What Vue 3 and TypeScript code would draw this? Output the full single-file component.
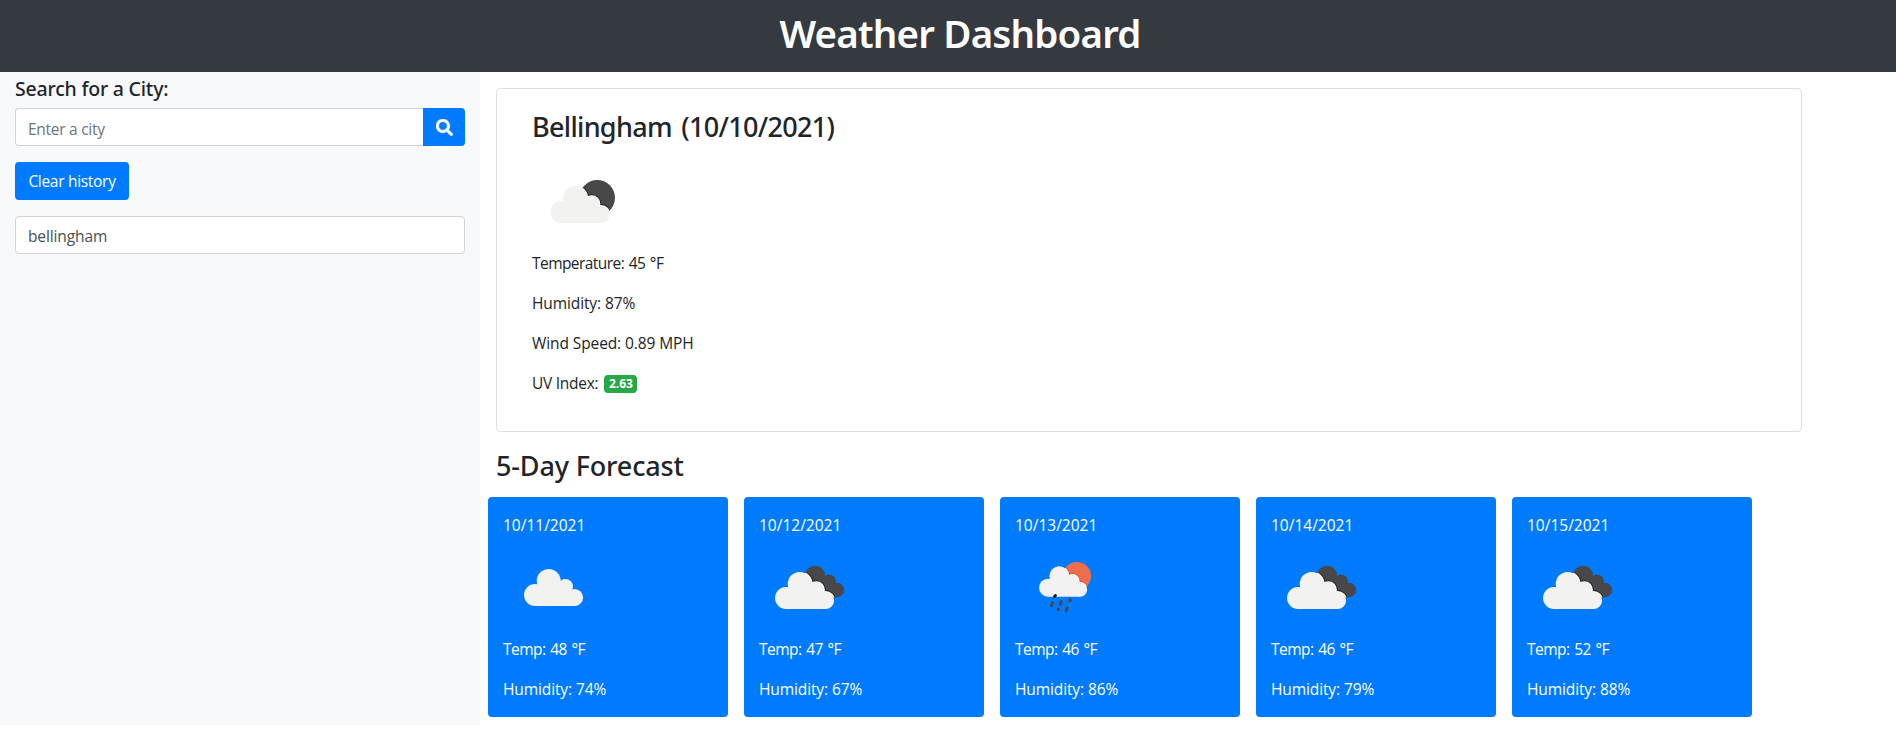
<script setup lang="ts">
import { ref } from 'vue'

interface Day {
  date: string
  icon: 'cloud' | 'broken' | 'rain'
  temp: number
  humidity: number
}

const query = ref('')
const history = ref<string[]>(['bellingham'])

const current = {
  city: 'Bellingham',
  date: '10/10/2021',
  temp: 45,
  humidity: 87,
  wind: 0.89,
  uv: 2.63,
}

const forecast: Day[] = [
  { date: '10/11/2021', icon: 'cloud', temp: 48, humidity: 74 },
  { date: '10/12/2021', icon: 'broken', temp: 47, humidity: 67 },
  { date: '10/13/2021', icon: 'rain', temp: 46, humidity: 86 },
  { date: '10/14/2021', icon: 'broken', temp: 46, humidity: 79 },
  { date: '10/15/2021', icon: 'broken', temp: 52, humidity: 88 },
]

function search() {
  const city = query.value.trim()
  if (city) history.value.unshift(city)
  query.value = ''
}
</script>

<template>
  <!-- Shared shapes for the weather icons -->
  <svg class="defs" width="0" height="0" aria-hidden="true">
    <defs>
      <g id="cloud-shape">
        <circle cx="44.7" cy="44" r="12" />
        <circle cx="31" cy="58" r="11" />
        <circle cx="61.4" cy="49.7" r="7.6" />
        <circle cx="70.5" cy="60.5" r="8.6" />
        <path d="M31 69.1V54L38 46h20l8 8 4.500 4v11.100z" />
      </g>
      <clipPath id="clip-night"><circle cx="65.300" cy="46.700" r="17.700" /></clipPath>
      <clipPath id="clip-sun"><circle cx="61" cy="39" r="14" /></clipPath>
      <clipPath id="clip-dark">
        <circle cx="55" cy="39" r="10.200" />
        <circle cx="69.300" cy="44" r="6.400" />
        <circle cx="76.800" cy="53" r="7.300" />
        <path d="M50 40h20l6 6 1 14.300H60z" />
      </clipPath>
    </defs>
  </svg>

  <header class="header"><h1>Weather Dashboard</h1></header>

  <div class="layout">
    <aside class="sidebar">
      <h5>Search for a City:</h5>
      <form class="search" @submit.prevent="search">
        <input v-model="query" class="control" type="text" placeholder="Enter a city" />
        <button class="btn search-btn" type="submit" aria-label="Search">
          <svg width="17" height="17" viewBox="0 0 512 512" fill="currentColor" stroke="currentColor" stroke-width="14">
            <path d="M505 442.700L405.300 343c-4.500-4.500-10.600-7-17-7H372c27.600-35.300 44-79.700 44-128C416 93.100 322.900 0 208 0S0 93.100 0 208s93.100 208 208 208c48.300 0 92.700-16.400 128-44v16.300c0 6.400 2.500 12.500 7 17l99.700 99.700c9.400 9.400 24.600 9.400 33.900 0l28.300-28.300c9.400-9.400 9.400-24.600.1-34zM208 336c-70.700 0-128-57.200-128-128 0-70.700 57.200-128 128-128 70.700 0 128 57.200 128 128 0 70.700-57.200 128-128 128z" />
          </svg>
        </button>
      </form>
      <button class="btn clear" type="button" @click="history = []">Clear history</button>
      <div v-for="city in history" :key="city" class="control past">{{ city }}</div>
    </aside>

    <main class="main">
      <section class="today">
        <h3 class="city">{{ current.city }} ({{ current.date }})</h3>
        <svg class="icon" viewBox="0 0 100 100">
          <circle cx="65.300" cy="46.700" r="17.700" fill="#48484a" />
          <g clip-path="url(#clip-night)">
            <use href="#cloud-shape" x="-1.500" y="3" fill="#242426" stroke="#242426" stroke-width="3.600" />
            <use href="#cloud-shape" x="-1.500" y="3" fill="#fff" stroke="#fff" stroke-width="1.800" />
          </g>
          <use href="#cloud-shape" x="-1.500" y="3" fill="#f2f2f1" />
        </svg>
        <p class="t-temp">Temperature: {{ current.temp }} °F</p>
        <p class="t-hum">Humidity: {{ current.humidity }}%</p>
        <p class="t-wind">Wind Speed: {{ current.wind }} MPH</p>
        <p class="t-uv"><span>UV Index:</span><span class="badge">{{ current.uv }}</span></p>
      </section>

      <h3 class="forecast-title">5-Day Forecast</h3>
      <div class="forecast">
        <article v-for="day in forecast" :key="day.date" class="day">
          <p class="date">{{ day.date }}</p>
          <svg class="icon" viewBox="0 0 100 100">
            <use v-if="day.icon === 'cloud'" href="#cloud-shape" fill="#f2f2f1" />
            <template v-else-if="day.icon === 'broken'">
              <g clip-path="url(#clip-dark)">
                <rect width="100" height="100" fill="#48484a" />
                <use href="#cloud-shape" x="-5" y="3" fill="#242426" stroke="#242426" stroke-width="3.600" />
                <use href="#cloud-shape" x="-5" y="3" fill="#fff" stroke="#fff" stroke-width="1.800" />
              </g>
              <use href="#cloud-shape" x="-5" y="3" fill="#f2f2f1" />
            </template>
            <template v-else>
              <circle cx="61" cy="39" r="14" fill="#ec6e4c" />
              <g clip-path="url(#clip-sun)">
                <use href="#cloud-shape" transform="translate(6.700 2.900) scale(.815 .824)" fill="#e2492b" stroke="#e2492b" stroke-width="3.400" />
                <use href="#cloud-shape" transform="translate(6.700 2.900) scale(.815 .824)" fill="#fff" stroke="#fff" stroke-width="1.600" />
              </g>
              <use href="#cloud-shape" transform="translate(6.700 2.900) scale(.815 .824)" fill="#f2f2f2" />
              <g stroke="#48484a" stroke-width="3.200" stroke-linecap="round">
                <path d="M38.700 59.400l.6-.8" stroke="#1f1f22" />
                <path d="M35.600 68.600l.9-2.700M44.300 67.300l.9-2.600M53.800 63.800l.4-.9M42.200 72.500l.2-.4M50.200 73.600l.9-2.500" />
              </g>
            </template>
          </svg>
          <p class="d-temp">Temp: {{ day.temp }} °F</p>
          <p class="t-hum">Humidity: {{ day.humidity }}%</p>
        </article>
      </div>
    </main>
  </div>
</template>

<style>
body {
  margin: 0;
  background: #fff;
}
</style>

<style scoped>
* {
  box-sizing: border-box;
}

.defs {
  display: block;
}

.header,
.layout {
  font-family: "Open Sans", "Noto Sans", sans-serif;
  font-size: 15.5px;
  line-height: 24px;
  color: #212529;
}

h1,
h3,
h5 {
  margin: 0;
  font-family: "Noto Sans", "Open Sans", sans-serif;
  font-weight: 500;
}

p {
  margin: 0 0 16px;
}

.header {
  height: 72px;
  padding: 8px 0 0 24px;
  background: #343a40;
  color: #fff;
  text-align: center;
}

h1 {
  font-size: 38.5px;
  font-weight: 600;
  line-height: 50px;
  letter-spacing: -0.82px;
}

.layout {
  display: flex;
  align-items: flex-start;
}

.sidebar {
  width: 480px;
  height: 653px;
  padding: 5px 15px 0;
  background: #f8f9fa;
}

h5 {
  margin-bottom: 7px;
  font-size: 19.5px;
  line-height: 24px;
  letter-spacing: -0.2px;
}

.search {
  display: flex;
  margin-bottom: 16px;
}

.control {
  display: block;
  width: 100%;
  height: 38px;
  padding: 7px 12px 5px;
  border: 1px solid #ced4da;
  border-radius: 4px;
  background: #fff;
  color: #495057;
  font: inherit;
  letter-spacing: -0.27px;
}

.control::placeholder {
  color: #6c757d;
  opacity: 1;
}

.search .control {
  flex: 1;
  min-width: 0;
  padding: 8px 12px 4px;
  border-right: 0;
  border-radius: 4px 0 0 4px;
}

.past {
  letter-spacing: -0.12px;
}

.btn {
  display: flex;
  align-items: center;
  justify-content: center;
  height: 38px;
  padding: 0;
  border: 0;
  border-radius: 4px;
  background: #007bff;
  color: #fff;
  font: inherit;
}

.search-btn {
  width: 42px;
  border-radius: 0 4px 4px 0;
}

.clear {
  width: 114px;
  margin-bottom: 16px;
  letter-spacing: -0.3px;
}

.main {
  padding: 16px 0 0 16px;
}

.today {
  width: 1306px;
  height: 344px;
  padding: 21px 35px 20px;
  border: 1px solid #dfdfdf;
  border-radius: 4px;
}

.city {
  margin-bottom: 7px;
  font-size: 27px;
  line-height: 34px;
  letter-spacing: -0.68px;
  word-spacing: 3px;
}

.icon {
  display: block;
  width: 100px;
  height: 100px;
}

.t-temp {
  letter-spacing: -0.55px;
  word-spacing: 1px;
}

.t-hum {
  letter-spacing: -0.11px;
}

.t-wind {
  letter-spacing: -0.1px;
}

.t-uv {
  display: flex;
  align-items: center;
  gap: 6px;
  letter-spacing: -0.26px;
}

.badge {
  width: 33px;
  height: 18px;
  margin-top: 1px;
  border-radius: 4px;
  background: #28a745;
  color: #fff;
  font-size: 12px;
  font-weight: 700;
  line-height: 18px;
  letter-spacing: 0;
  text-align: center;
}

.forecast-title {
  margin: 17px 0 14px;
  font-size: 27px;
  line-height: 34px;
  letter-spacing: -0.15px;
}

.forecast {
  display: flex;
  gap: 16px;
  margin-left: -8px;
}

.day {
  width: 240px;
  height: 220px;
  padding: 16px 15px;
  border-radius: 4px;
  background: #007bff;
  color: #fff;
}

.day .icon {
  margin-left: 1px;
}

.date {
  margin: 0;
  letter-spacing: 0;
}

.d-temp {
  letter-spacing: -0.5px;
  word-spacing: 1px;
}
</style>
